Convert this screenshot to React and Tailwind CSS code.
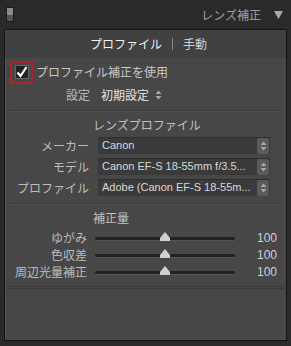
import React from 'react';

const FONT = { fontFamily: '"Noto Sans CJK JP", "Noto Sans", sans-serif' };

// small up/down stepper used by the popup menus
const Stepper = ({ boxed }) => (
  <span
    className={
      boxed
        ? 'flex h-[16px] w-[12px] items-center justify-center rounded-[2px] bg-[#5a5a5a]'
        : 'flex h-[16px] w-[10px] items-center justify-center'
    }
  >
    <svg width="7" height="10" viewBox="0 0 7 10">
      <path d="M3.5 0.5 L6.5 4 L0.5 4 Z" fill="#a8a8a8" />
      <path d="M3.5 9.5 L6.5 6 L0.5 6 Z" fill="#a8a8a8" />
    </svg>
  </span>
);

const Select = ({ label, value }) => (
  <div className="flex h-[21px] items-center">
    <span className="w-[84px] text-right text-[12px] text-[#bdbdbd]">{label}</span>
    <div className="ml-[9px] flex h-[17px] w-[172px] items-center rounded-[2px] bg-[#3a3a3a] pl-[4px] pr-[1px] shadow-[inset_0_1px_0_#2c2c2c]">
      <span className="flex-1 truncate text-[11px] leading-none text-[#d8d8d8]" style={{ fontFamily: '"Liberation Sans", sans-serif' }}>
        {value}
      </span>
      <Stepper boxed />
    </div>
  </div>
);

const Slider = ({ label }) => (
  <div className="flex h-[17px] items-center">
    <span className="w-[82px] text-right text-[12px] text-[#bdbdbd]">{label}</span>
    <div className="relative ml-[8px] h-[10px] w-[140px]">
      <div className="absolute left-0 right-0 top-[4px] h-[3px] rounded-full bg-[#222] shadow-[0_1px_0_#555]" />
      <svg className="absolute left-[64px] top-[-1px]" width="12" height="10" viewBox="0 0 12 10">
        <path d="M6 0 L11 6 L11 9 L1 9 L1 6 Z" fill="#cfcfcf" />
      </svg>
    </div>
    <span className="ml-[22px] text-[12px] text-[#d0d0d0]" style={{ fontFamily: '"Liberation Sans", sans-serif' }}>100</span>
  </div>
);

export default function App() {
  return (
    <div className="h-[346px] w-[291px] overflow-hidden bg-[#2a2a2a]" style={FONT}>
      {/* header */}
      <div className="flex h-[29px] items-center pl-[6px] pr-[8px]">
        <div className="flex h-[15px] w-[8px] flex-col border border-[#1b1b1b]">
          <div className="flex-1 bg-[#8c8c8c]" />
          <div className="flex-1 bg-[#555]" />
        </div>
        <div className="flex-1" />
        <span className="text-[12px] text-[#a0a0a0]">レンズ補正</span>
        <svg className="ml-[13px]" width="9" height="9" viewBox="0 0 9 9">
          <path d="M0 1 L9 1 L4.5 9 Z" fill="#a8a8a8" />
        </svg>
      </div>

      {/* panel */}
      <div className="mx-[4px] h-[312px] border border-[#151515] bg-[#474747] shadow-[inset_1px_0_0_#555]">
        {/* tabs */}
        <div className="flex h-[28px] items-center justify-center bg-[#414141] pl-[6px]">
          <span className="text-[12px] text-[#f0f0f0]">プロファイル</span>
          <span className="mx-[10px] h-[12px] w-px bg-[#888]" />
          <span className="text-[12px] text-[#d0d0d0]">手動</span>
        </div>

        {/* enable + setup */}
        <div className="flex h-[26px] items-center pl-[5px] pt-[2px]">
          <div className="flex h-[23px] w-[23px] items-center justify-center border-2 border-[#a8262a]">
            <div className="flex h-[14px] w-[14px] items-center justify-center border border-[#666] bg-[#222]">
              <svg width="12" height="12" viewBox="0 0 12 12">
                <path d="M1.5 6.5 L4.5 10 L10.5 1" stroke="#fff" strokeWidth="2.2" fill="none" />
              </svg>
            </div>
          </div>
          <span className="ml-[3px] text-[12px] text-[#c8c8c8]">プロファイル補正を使用</span>
        </div>
        <div className="flex h-[22px] items-center">
          <span className="w-[85px] text-right text-[12px] text-[#bdbdbd]">設定</span>
          <span className="ml-[11px] text-[12px] text-[#e4e4e4]">初期設定</span>
          <span className="ml-[4px]"><Stepper /></span>
        </div>

        <div className="mx-[6px] mt-[4px] h-px bg-[#3a3a3a] shadow-[0_1px_0_#555]" />

        {/* lens profile */}
        <div className="pl-[88px] pt-[5px] text-[12px] text-[#c0c0c0]">レンズプロファイル</div>
        <div className="mt-[1px] flex flex-col">
          <Select label="メーカー" value="Canon" />
          <Select label="モデル" value="Canon EF-S 18-55mm f/3.5..." />
          <Select label="プロファイル" value="Adobe (Canon EF-S 18-55m..." />
        </div>

        <div className="mx-[6px] mt-[5px] h-px bg-[#3a3a3a] shadow-[0_1px_0_#555]" />

        {/* amount */}
        <div className="pl-[88px] pt-[5px] text-[12px] text-[#c0c0c0]">補正量</div>
        <div className="mt-[2px] flex flex-col">
          <Slider label="ゆがみ" />
          <Slider label="色収差" />
          <Slider label="周辺光量補正" />
        </div>

        <div className="mx-[2px] mt-[6px] h-[3px] border-y border-[#3a3a3a]" />
      </div>
    </div>
  );
}
